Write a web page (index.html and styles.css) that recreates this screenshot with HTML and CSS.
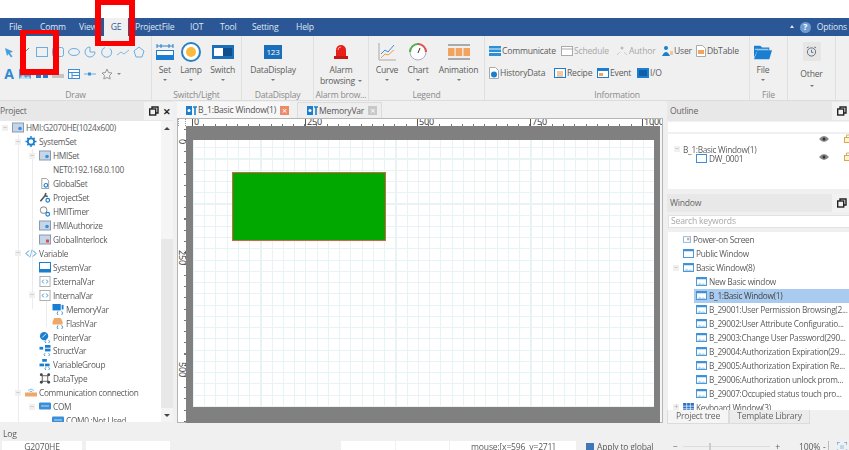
FILE: index.html
```html
<!DOCTYPE html>
<html lang="en">
<head>
    <meta charset="UTF-8">
    <meta name="viewport" content="width=device-width, initial-scale=1.0">
    <title>HMI Editor</title>
    <link rel="stylesheet" href="styles.css">
</head>
<body>
<svg class="defs" width="0" height="0">
    <symbol id="win" viewBox="0 0 12 10"><rect x=".5" y=".5" width="11" height="9" fill="#fff" stroke="#3a8fd8"/><rect x=".5" y=".5" width="11" height="2" fill="#3a8fd8"/><path d="M1 9l3-3 2 2 2-1 3 2z" fill="#a9d6f0"/></symbol>
    <symbol id="gear" viewBox="0 0 12 12"><circle cx="6" cy="6" r="3.500" fill="none" stroke="#1a7fd0" stroke-width="2"/><path d="M6 0v2M6 10v2M0 6h2M10 6h2M2 2l1.400 1.400M8.600 8.600L10 10M10 2L8.600 3.400M3.400 8.600L2 10" stroke="#1a7fd0" stroke-width="1.600"/></symbol>
    <symbol id="mon" viewBox="0 0 12 10"><rect x=".5" y=".5" width="11" height="9" fill="#c6d6e8" stroke="#8a9bb0"/><circle cx="8" cy="6" r="1.800" fill="#3a8fd8"/></symbol>
    <symbol id="doc" viewBox="0 0 12 12"><path d="M2.500.5h5l2.500 2.500v8.500h-7.500z" fill="#fff" stroke="#999"/><circle cx="7" cy="8" r="2" fill="none" stroke="#1a7fd0" stroke-width="1.200"/></symbol>
    <symbol id="wrench" viewBox="0 0 12 12"><path d="M1 10l5-6 1-3M6 4l3 1" stroke="#555" stroke-width="1.800" fill="none"/><circle cx="9" cy="9" r="2" fill="none" stroke="#1a7fd0" stroke-width="1.300"/></symbol>
    <symbol id="timer" viewBox="0 0 12 12"><rect x="1" y="1" width="7" height="7" rx="3" fill="#fff" stroke="#777"/><circle cx="9" cy="9" r="2" fill="none" stroke="#1a7fd0" stroke-width="1.300"/></symbol>
    <symbol id="lock" viewBox="0 0 12 10"><rect x=".5" y=".5" width="11" height="9" fill="#c6d6e8" stroke="#8a9bb0"/><rect x="7" y="5" width="3" height="3" fill="#e0484d"/></symbol>
    <symbol id="code" viewBox="0 0 12 10"><path d="M4 2L1 5l3 3M8 2l3 3-3 3" fill="none" stroke="#2a90d8"/><path d="M7 1L5 9" stroke="#8cc0e6"/></symbol>
    <symbol id="sys" viewBox="0 0 12 11"><rect x=".5" y=".5" width="11" height="7" fill="#fff" stroke="#1a7fd0"/><rect x="0" y="8" width="12" height="2.500" fill="#1a7fd0"/></symbol>
    <symbol id="box" viewBox="0 0 12 12"><rect x=".5" y=".5" width="11" height="11" fill="#fff" stroke="#aaa"/><path d="M4.500 4L3 6l1.500 2M7.500 4L9 6 7.500 8" fill="none" stroke="#2a90d8"/></symbol>
    <symbol id="mem" viewBox="0 0 12 12"><rect x="0" y="0" width="9" height="7" fill="#1a7fd0"/><rect x="10" y="1" width="2" height="5" fill="#1a7fd0"/><path d="M6 8L5 10l1 2M10 8l1 2-1 2" fill="none" stroke="#2a90d8"/></symbol>
    <symbol id="flash" viewBox="0 0 12 12"><path d="M2 0h7l2 4v3H0V4z" fill="#f0a868"/><path d="M6 8L5 10l1 2M10 8l1 2-1 2" fill="none" stroke="#2a90d8"/></symbol>
    <symbol id="ptr" viewBox="0 0 12 12"><circle cx="5" cy="4.500" r="4.500" fill="#1a7fd0"/><path d="M3 6l4-4" stroke="#fff"/><path d="M7 9l-1 1.500 1 1.500M10 9l1 1.500-1 1.500" fill="none" stroke="#2a90d8"/></symbol>
    <symbol id="struct" viewBox="0 0 12 12"><rect x="0" y="2" width="4" height="3" fill="#1a7fd0"/><rect x="6" y="0" width="6" height="3" fill="#1a7fd0"/><rect x="6" y="4" width="6" height="3" fill="#1a7fd0"/><path d="M6 9l-1 1.500 1 1.500M10 9l1 1.500-1 1.500" fill="none" stroke="#2a90d8"/></symbol>
    <symbol id="group" viewBox="0 0 12 12"><rect x="3" y="0" width="5" height="3" fill="#1a7fd0"/><rect x="0" y="5" width="5" height="3" fill="#1a7fd0"/><rect x="6" y="5" width="5" height="3" fill="#1a7fd0"/><path d="M7 9l-1 1.500 1 1.500M10 9l1 1.500-1 1.500" fill="none" stroke="#2a90d8"/></symbol>
    <symbol id="dtype" viewBox="0 0 12 12"><rect x="3" y="3" width="6" height="6" fill="none" stroke="#555"/><circle cx="2" cy="2" r="1.600" fill="#444"/><circle cx="10" cy="2" r="1.600" fill="#444"/><circle cx="2" cy="10" r="1.600" fill="#444"/><circle cx="10" cy="10" r="1.600" fill="#444"/></symbol>
    <symbol id="comm" viewBox="0 0 12 10"><rect x="0" y="5" width="12" height="4" fill="#f0a868"/><path d="M3 3q3-3 6 0M4.500 4.500q1.500-1.500 3 0" fill="none" stroke="#7cc0ee"/></symbol>
    <symbol id="com" viewBox="0 0 12 8"><rect width="12" height="7" rx="1" fill="#3a8fd8"/><path d="M2 3.500h8" stroke="#bcdcf4"/></symbol>
    <symbol id="pow" viewBox="0 0 10 8"><rect x=".5" y=".5" width="9" height="7" fill="#fff" stroke="#6aaee4"/><rect x="5" y="2" width="3" height="3" fill="#f0a080"/></symbol>
    <symbol id="pub" viewBox="0 0 12 10"><rect x=".5" y=".5" width="11" height="9" fill="#fff" stroke="#3a8fd8"/><rect x=".5" y=".5" width="11" height="2" fill="#3a8fd8"/></symbol>
    <symbol id="kbd" viewBox="0 0 12 10"><rect width="12" height="10" fill="#2a6fc8"/><path d="M0 3.500h12M0 6.500h12M4 0v10M8 0v10" stroke="#fff" stroke-width=".8"/></symbol>
    <symbol id="restore" viewBox="0 0 10 10"><rect x=".7" y="3" width="6" height="6" fill="none" stroke="#222" stroke-width="1.400"/><path d="M3 3V1h6v6H7" fill="none" stroke="#222" stroke-width="1.400"/></symbol>
    <symbol id="eye" viewBox="0 0 10 6"><path d="M0 3q5-6 10 0-5 6-10 0z" fill="#888"/><circle cx="5" cy="3" r="1.500" fill="#333"/></symbol>
    <symbol id="pad" viewBox="0 0 9 9"><rect x=".5" y="3.500" width="8" height="5" fill="#fff3d0" stroke="#d6a850"/><path d="M2.500 3.500V1h4v2.500" fill="none" stroke="#c9b27a"/></symbol>
    <symbol id="dt" viewBox="0 0 11 9"><rect width="6" height="9" fill="#1a7fd0"/><circle cx="3" cy="4.500" r="1.500" fill="#fff"/><path d="M7 1h4M9 1v8" stroke="#1a7fd0" stroke-width="1.600"/></symbol>
</svg>

<div class="page">
    <div class="top-gap"></div>
    <div class="menu">
        <span class="menu-item m-file">File</span>
        <span class="menu-item m-comm">Comm</span>
        <span class="menu-item m-view">View</span>
        <span class="menu-item m-ge">GE</span>
        <span class="menu-item m-proj">ProjectFile</span>
        <span class="menu-item m-iot">IOT</span>
        <span class="menu-item m-tool">Tool</span>
        <span class="menu-item m-set">Setting</span>
        <span class="menu-item m-help">Help</span>
        <span class="menu-right"><span class="up-caret"></span><span class="help-dot">?</span><span>Options</span></span>
    </div>

    <div class="ribbon">
        <div class="group g-draw">
            <div class="group-body draw-rows">
                <div class="draw-row">
                    <svg viewBox="0 0 12 12"><path d="M2 2l8 3.500-3 1.500 2.500 3.500-1.500 1-2.500-3.500-1.500 2z" fill="#4a9fe0"/></svg>
                    <svg viewBox="0 0 12 12"><path d="M2 10l8-8" stroke="#777"/></svg>
                    <svg viewBox="0 0 12 12"><rect x=".5" y="1.500" width="11" height="9" fill="none" stroke="#6aaee4"/></svg>
                    <svg viewBox="0 0 12 12"><rect x=".5" y="1.500" width="11" height="9" rx="2" fill="none" stroke="#6aaee4"/></svg>
                    <svg viewBox="0 0 12 12"><ellipse cx="6" cy="6" rx="5.500" ry="3.500" fill="none" stroke="#6aaee4"/></svg>
                    <svg viewBox="0 0 12 12"><path d="M6 1a5 5 0 1 0 5 5H6z" fill="none" stroke="#6aaee4"/></svg>
                    <svg viewBox="0 0 12 12"><path d="M9 2.500a5 5 0 1 1-5-1" fill="none" stroke="#6aaee4"/></svg>
                    <svg viewBox="0 0 12 12"><path d="M0 9l4-3 3 2 5-4" fill="none" stroke="#8ab8dc"/></svg>
                    <svg viewBox="0 0 12 12"><path d="M6 1l5 4-2 6H3L1 5z" fill="none" stroke="#6aaee4"/></svg>
                </div>
                <div class="draw-row">
                    <span class="big-a">A</span>
                    <svg viewBox="0 0 12 12"><rect y="1" width="12" height="10" fill="#5a9fd8"/><path d="M0 11l4-4 3 3 2-2 3 3z" fill="#bfe0f2"/></svg>
                    <svg viewBox="0 0 12 12"><rect y="2" width="5" height="8" fill="#1a7fd0"/><rect x="7" y="2" width="5" height="8" fill="#1a7fd0"/></svg>
                    <svg viewBox="0 0 12 12"><rect y="6" width="12" height="4" fill="#c4c4c4"/></svg>
                    <svg viewBox="0 0 12 12"><rect x=".5" y="1.500" width="11" height="9" fill="#fff" stroke="#3a8fd8"/><path d="M.5 4.500h11M4 4.500v6M4 7.500h7.500" stroke="#3a8fd8"/></svg>
                    <svg viewBox="0 0 12 12"><path d="M0 6h12" stroke="#6aaee4"/><rect x="4" y="4.500" width="3" height="3" fill="#3a8fd8"/></svg>
                    <svg viewBox="0 0 12 12"><path d="M6 1l1.500 3.500 3.500.5-2.500 2.500.7 3.500L6 9.500 2.800 11l.7-3.500L1 5l3.500-.5z" fill="none" stroke="#999"/></svg>
                    <span class="mini-caret"></span>
                </div>
            </div>
            <div class="group-label">Draw</div>
        </div>

        <div class="group g-switch">
            <div class="group-body tools">
                <div class="tool t-set">
                    <svg class="big-icon" viewBox="0 0 18 18"><path d="M1 1v4M5 1v4M13 1v4M17 1v4M1 3h16" stroke="#2a7fc8"/><rect x="0" y="7" width="18" height="10" fill="#1a7fd0"/><rect x="1" y="8" width="16" height="4" fill="#fff"/></svg>
                    <span>Set</span><i class="caret"></i>
                </div>
                <div class="tool t-lamp">
                    <svg class="big-icon lamp" viewBox="0 0 20 20"><circle cx="10" cy="10" r="9" fill="#fff" stroke="#2a7fc8" stroke-width="2"/><circle cx="10" cy="10" r="5" fill="#f7bb3e"/></svg>
                    <span>Lamp</span><i class="caret"></i>
                </div>
                <div class="tool t-switch">
                    <svg class="big-icon wide" viewBox="0 0 22 18"><rect y="2" width="22" height="14" fill="#1a6fb8"/><rect x="2" y="5" width="9" height="8" fill="#fff"/><rect x="11" y="5" width="9" height="8" fill="#0f4f8c"/></svg>
                    <span>Switch</span><i class="caret"></i>
                </div>
            </div>
            <div class="group-label">Switch/Light</div>
        </div>

        <div class="group g-display">
            <div class="group-body tools">
                <div class="tool t-data">
                    <span class="num-icon">123</span>
                    <span>DataDisplay</span><i class="caret"></i>
                </div>
            </div>
            <div class="group-label">DataDisplay</div>
        </div>

        <div class="group g-alarm">
            <div class="group-body tools">
                <div class="tool t-alarm">
                    <svg class="big-icon" viewBox="0 0 18 18"><path d="M4 13V7a5 5 0 0 1 10 0v6z" fill="#e8201c"/><path d="M6 7a3 3 0 0 1 3-3" stroke="#ffb0a8" fill="none"/><rect x="2" y="13" width="14" height="3" fill="#c41814"/></svg>
                    <span class="two-line">Alarm<br>browsing <i class="caret inline"></i></span>
                </div>
            </div>
            <div class="group-label">Alarm brow...</div>
        </div>

        <div class="group g-legend">
            <div class="group-body tools">
                <div class="tool t-curve">
                    <svg class="big-icon" viewBox="0 0 18 18"><path d="M1 0v17h17" stroke="#aaa" fill="none"/><path d="M3 11l4-4 3 2 6-7" stroke="#3a8fd8" fill="none"/><path d="M3 15l4-4 3 1 6-5" stroke="#f0a040" fill="none"/></svg>
                    <span>Curve</span><i class="caret"></i>
                </div>
                <div class="tool t-chart">
                    <svg class="big-icon" viewBox="0 0 18 18"><circle cx="9" cy="9" r="8" fill="#fff" stroke="#aac"/><path d="M9 1a8 8 0 0 1 8 8" stroke="#e05050" stroke-width="2" fill="none"/><path d="M1 9a8 8 0 0 1 8-8" stroke="#50b050" stroke-width="2" fill="none"/><path d="M9 10l2-5" stroke="#333"/></svg>
                    <span>Chart</span><i class="caret"></i>
                </div>
                <div class="tool t-anim">
                    <svg class="big-icon wide" viewBox="0 0 22 18"><rect y="1" width="22" height="2" fill="#aaa"/><rect y="15" width="22" height="2" fill="#aaa"/><rect y="5" width="6.500" height="8" fill="#f2a35e"/><rect x="7.700" y="5" width="6.500" height="8" fill="#f2a35e"/><rect x="15.500" y="5" width="6.500" height="8" fill="#f2a35e"/></svg>
                    <span>Animation</span><i class="caret"></i>
                </div>
            </div>
            <div class="group-label">Legend</div>
        </div>

        <div class="group g-info">
            <div class="group-body info-rows">
                <div class="info-row">
                    <span class="info i-comm"><svg viewBox="0 0 12 10"><path d="M0 0h12v2.500H0zM0 3.500h12V6H0zM0 7h12v3H0z" fill="#2a90d8"/></svg>Communicate</span>
                    <span class="info off i-sched"><svg viewBox="0 0 12 10"><rect x=".5" y=".5" width="11" height="9" fill="#fff" stroke="#aaa"/><path d="M.5 3h11" stroke="#aaa"/></svg>Schedule</span>
                    <span class="info off i-auth"><svg viewBox="0 0 12 10"><circle cx="6" cy="2" r="1.500" fill="#bbb"/><path d="M1 9l3-3M11 9L8 6" stroke="#ccc"/></svg>Author</span>
                    <span class="info i-user"><svg viewBox="0 0 12 10"><circle cx="5" cy="2" r="2" fill="#1a7fd0"/><path d="M1 10q4-8 8 0z" fill="#1a7fd0"/><path d="M9 6h3M9 8h3" stroke="#f0a040"/></svg>User</span>
                    <span class="info i-db"><svg class="slim" viewBox="0 0 10 12"><path d="M.5.500h6l3 3v8h-9z" fill="#fff" stroke="#aaa"/><rect x="2" y="5" width="6" height="4" fill="#f2a35e"/></svg>DbTable</span>
                </div>
                <div class="info-row">
                    <span class="info i-hist"><svg class="slim" viewBox="0 0 10 12"><path d="M.5.500h6l3 3v8h-9z" fill="#fff" stroke="#aaa"/><circle cx="5" cy="7.500" r="3" fill="#1a7fd0"/></svg>HistoryData</span>
                    <span class="info i-rec"><svg viewBox="0 0 12 10"><rect x=".5" y=".5" width="11" height="9" fill="#fff" stroke="#1a7fd0"/><rect x="3" y="3" width="6" height="6" fill="#f2c8a0"/></svg>Recipe</span>
                    <span class="info i-evt"><svg viewBox="0 0 12 10"><rect x=".5" y=".5" width="11" height="9" fill="#fff" stroke="#1a7fd0"/><rect x="1" y="1" width="10" height="2" fill="#1a7fd0"/><rect x="2" y="5" width="4" height="3" fill="#f2a35e"/></svg>Event</span>
                    <span class="info i-io"><svg viewBox="0 0 12 10"><rect width="12" height="10" fill="#1a7fd0"/><rect x="2" y="2" width="8" height="6" fill="#0f5fa8"/></svg>I/O</span>
                </div>
            </div>
            <div class="group-label">Information</div>
        </div>

        <div class="group g-file">
            <div class="group-body tools">
                <div class="tool t-folder">
                    <svg class="big-icon" viewBox="0 0 20 18"><path d="M0 2h7l2 2h8v3H4L0 15z" fill="#1a7fd0"/><path d="M4 7h16l-3 10H0z" fill="#1a7fd0"/><path d="M1 6h15" stroke="#fff" stroke-width=".8"/></svg>
                    <span>File</span><i class="caret"></i>
                </div>
            </div>
            <div class="group-label">File</div>
        </div>

        <div class="group g-other">
            <div class="group-body tools">
                <div class="tool t-other">
                    <span class="clock-box"><svg viewBox="0 0 12 12"><circle cx="6" cy="6.500" r="4.500" fill="none" stroke="#666"/><path d="M6 4v3h2" stroke="#1a7fd0" fill="none"/><path d="M1 2l2-1M11 2L9 1" stroke="#666"/></svg></span>
                    <span>Other</span><i class="caret"></i>
                </div>
            </div>
        </div>
        <div class="ribbon-end"></div>
    </div>

    <div class="main">
        <div class="panel left-panel">
            <div class="panel-head">
                <span>Project</span>
                <span class="head-btns"><svg class="restore-ico"><use href="#restore"/></svg><b>✕</b></span>
            </div>
            <div class="tree-wrap">
                <div class="tree project-tree">
                    <div class="row lv0"><i class="exp">−</i><svg><use href="#mon"/></svg>HMI:G2070HE(1024x600)</div>
                    <div class="row lv1"><i class="exp">−</i><svg><use href="#gear"/></svg>SystemSet</div>
                    <div class="row lv2"><i class="exp">−</i><svg><use href="#mon"/></svg>HMISet</div>
                    <div class="row lv2 plain">NET0:192.168.0.100</div>
                    <div class="row lv2"><svg><use href="#doc"/></svg>GlobalSet</div>
                    <div class="row lv2"><svg><use href="#wrench"/></svg>ProjectSet</div>
                    <div class="row lv2"><svg><use href="#timer"/></svg>HMITimer</div>
                    <div class="row lv2"><svg><use href="#mon"/></svg>HMIAuthorize</div>
                    <div class="row lv2"><svg><use href="#lock"/></svg>GlobalInterlock</div>
                    <div class="row lv1"><i class="exp">−</i><svg><use href="#code"/></svg>Variable</div>
                    <div class="row lv2"><svg><use href="#sys"/></svg>SystemVar</div>
                    <div class="row lv2"><svg><use href="#box"/></svg>ExternalVar</div>
                    <div class="row lv2"><i class="exp">−</i><svg><use href="#box"/></svg>InternalVar</div>
                    <div class="row lv3"><svg><use href="#mem"/></svg>MemoryVar</div>
                    <div class="row lv3"><svg><use href="#flash"/></svg>FlashVar</div>
                    <div class="row lv2"><svg><use href="#ptr"/></svg>PointerVar</div>
                    <div class="row lv2"><svg><use href="#struct"/></svg>StructVar</div>
                    <div class="row lv2"><svg><use href="#group"/></svg>VariableGroup</div>
                    <div class="row lv2"><svg><use href="#dtype"/></svg>DataType</div>
                    <div class="row lv1"><i class="exp">−</i><svg><use href="#comm"/></svg>Communication connection</div>
                    <div class="row lv2"><i class="exp">−</i><svg><use href="#com"/></svg>COM</div>
                    <div class="row lv3"><svg><use href="#com"/></svg>COM0 :Not Used</div>
                </div>
                <div class="scrollbar">
                    <span class="arrow up"></span>
                    <span class="thumb"></span>
                    <span class="arrow down"></span>
                </div>
            </div>
        </div>

        <div class="center">
            <div class="doc-tabs">
                <div class="doc-tab active"><svg><use href="#dt"/></svg>B_1:Basic Window(1)<span class="tab-x red">×</span></div>
                <div class="doc-tab second"><svg><use href="#dt"/></svg>MemoryVar<span class="tab-x">×</span></div>
            </div>
            <div class="editor">
                <div class="ruler-top">
                    <span class="corner"></span>
                    <div class="ruler-h">
                        <span class="tick-label l0">0</span>
                        <span class="tick-label l250">250</span>
                        <span class="tick-label l500">500</span>
                        <span class="tick-label l750">750</span>
                        <span class="tick-label l1000">1000</span>
                    </div>
                </div>
                <div class="editor-body">
                    <div class="ruler-v">
                        <span class="v-label v0">0</span>
                        <span class="v-label v250">250</span>
                        <span class="v-label v500">500</span>
                    </div>
                    <div class="stage">
                        <div class="screen">
                            <div class="shape"></div>
                        </div>
                    </div>
                </div>
            </div>
        </div>

        <div class="panel right-panel">
            <div class="panel-head">
                <span>Outline</span>
                <span class="head-btns"><svg class="restore-ico"><use href="#restore"/></svg></span>
            </div>
            <div class="outline-strip"></div>
            <div class="outline-tree">
                <div class="o-row first"><svg class="eye"><use href="#eye"/></svg><svg class="pad"><use href="#pad"/></svg></div>
                <div class="o-row parent"><i class="exp">−</i><span>B_1:Basic Window(1)</span></div>
                <div class="o-row child"><span class="o-rect"></span><span>DW_0001</span><svg class="eye"><use href="#eye"/></svg><svg class="pad"><use href="#pad"/></svg></div>
            </div>
            <div class="panel-head second-head">
                <span>Window</span>
                <span class="head-btns"><svg class="restore-ico"><use href="#restore"/></svg></span>
            </div>
            <div class="search">Search keywords</div>
            <div class="tree window-tree">
                <div class="row wl1 narrow"><svg><use href="#pow"/></svg>Power-on Screen</div>
                <div class="row wl1"><svg><use href="#pub"/></svg>Public Window</div>
                <div class="row wl1"><i class="exp">−</i><svg><use href="#win"/></svg>Basic Window(8)</div>
                <div class="row wl2"><svg><use href="#win"/></svg>New Basic window</div>
                <div class="row wl2 selected"><svg><use href="#win"/></svg>B_1:Basic Window(1)</div>
                <div class="row wl2"><svg><use href="#win"/></svg>B_29001:User Permission Browsing(2...</div>
                <div class="row wl2"><svg><use href="#win"/></svg>B_29002:User Attribute Configuratio...</div>
                <div class="row wl2"><svg><use href="#win"/></svg>B_29003:Change User Password(290...</div>
                <div class="row wl2"><svg><use href="#win"/></svg>B_29004:Authorization Expiration(29...</div>
                <div class="row wl2"><svg><use href="#win"/></svg>B_29005:Authorization Expiration Re...</div>
                <div class="row wl2"><svg><use href="#win"/></svg>B_29006:Authorization unlock prom...</div>
                <div class="row wl2"><svg><use href="#win"/></svg>B_29007:Occupied status touch pro...</div>
                <div class="row wl1"><i class="exp">+</i><svg><use href="#kbd"/></svg>Keyboard Window(3)</div>
            </div>
            <div class="tree-tabs">
                <span class="tree-tab on">Project tree</span>
                <span class="tree-tab">Template Library</span>
            </div>
        </div>
    </div>

    <div class="log-area">
        <div class="log-title">Log</div>
        <div class="status">
            <span class="cell c1">G2070HE</span>
            <span class="cell c2"></span>
            <span class="cell c3"></span>
            <span class="cell c4"></span>
            <span class="cell c5">mouse:[x=596&nbsp; y=271]</span>
            <span class="check"></span>
            <span class="apply">Apply to global</span>
            <span class="slider"><span>−</span><span class="sl-track"><i></i></span><span>+</span></span>
            <span class="zoom-val">100%</span>
            <span class="zoom-drop">-</span>
            <svg class="fit" viewBox="0 0 10 10"><path d="M0 3V0h3M7 0h3v3M10 7v3H7M3 10H0V7" fill="none" stroke="#3a8fd8"/><rect x="3" y="3" width="4" height="4" fill="#bcd8ee"/></svg>
        </div>
    </div>
</div>

<!-- the two red boxes somebody drew on the screenshot -->
<div class="mark mark-tool"></div>
<div class="mark mark-tab"></div>
</body>
</html>
```

FILE: styles.css
```css
* {
    box-sizing: border-box;
}
html, body {
    margin: 0;
    padding: 0;
    width: 849px;
    height: 450px;
    overflow: hidden;
    background-color: #fff;
}
body {
    font-family: "Open Sans", "Noto Sans", sans-serif;
    font-size: 8.6px;
    letter-spacing: -0.2px;
    color: #5c5c5c;
    position: relative;
}
i {
    font-style: normal;
}
.defs {
    position: absolute;
}
.page {
    width: 849px;
    height: 450px;
    display: flex;
    flex-direction: column;
    filter: blur(0.35px);
}
.top-gap {
    height: 18px;
    flex: none;
}

/* menu bar */
.menu {
    height: 18px;
    flex: none;
    background-color: #2b5797;
    color: #dfe7f2;
    display: flex;
    align-items: center;
    position: relative;
}
.menu-item {
    position: absolute;
    top: 0;
    height: 18px;
    line-height: 18px;
}
.m-file { left: 9px; }
.m-comm { left: 40px; }
.m-view { left: 79px; }
.m-ge {
    left: 104px;
    width: 24px;
    text-align: center;
    background-color: #f0f0f0;
    color: #2b5797;
}
.m-proj { left: 135px; }
.m-iot { left: 190px; }
.m-tool { left: 220px; }
.m-set { left: 252px; }
.m-help { left: 296px; }
.menu-right {
    margin-left: auto;
    display: flex;
    align-items: center;
    gap: 6px;
    padding-right: 2px;
}
.up-caret {
    width: 0;
    height: 0;
    border: 2.500px solid transparent;
    border-bottom: 3px solid #dfe7f2;
    margin-bottom: 3px;
}
.help-dot {
    width: 11px;
    height: 11px;
    border-radius: 50%;
    background-color: #6f9bd3;
    color: #fff;
    font-weight: 700;
    text-align: center;
    line-height: 11px;
}

/* ribbon */
.ribbon {
    height: 65px;
    flex: none;
    display: flex;
    background-color: #f0f0f0;
    border-bottom: 1px solid #dcdcdc;
}
.group {
    flex: none;
    border-right: 1px solid #e0e0e0;
    display: flex;
    flex-direction: column;
}
.group-body {
    flex: 1;
    min-height: 0;
}
.group-label {
    height: 11px;
    line-height: 12px;
    text-align: center;
    color: #8a8a8a;
    white-space: nowrap;
}
.g-draw { width: 152px; }
.g-switch { width: 90px; }
.g-display { width: 72px; }
.g-alarm { width: 55px; }
.g-legend { width: 116px; }
.g-info { width: 265px; }
.g-file { width: 38px; }
.g-other { width: 48px; }
.ribbon-end {
    flex: 1;
}
.draw-rows {
    padding-top: 5px;
}
.draw-row {
    display: flex;
    align-items: center;
    height: 22px;
    padding-left: 3px;
    gap: 4.300px;
}
.draw-row svg {
    width: 12px;
    height: 12px;
    flex: none;
}
.big-a {
    width: 12px;
    font-size: 14px;
    font-weight: 700;
    color: #2f8ad6;
    text-align: center;
    line-height: 12px;
}
.mini-caret {
    width: 0;
    height: 0;
    border: 2px solid transparent;
    border-top: 2.500px solid #888;
    margin-top: 2px;
}
.tools {
    display: flex;
    align-items: flex-start;
}
.tool {
    display: flex;
    flex-direction: column;
    align-items: center;
    white-space: nowrap;
    padding-top: 7px;
    line-height: 11px;
}
.big-icon {
    width: 18px;
    height: 18px;
    margin-bottom: 4px;
}
.big-icon.wide {
    width: 22px;
}
.big-icon.lamp {
    width: 20px;
    height: 20px;
    margin-top: -1px;
    margin-bottom: 3px;
}
.caret {
    width: 0;
    height: 0;
    border: 2px solid transparent;
    border-top: 2.500px solid #777;
    margin-top: 3px;
}
.caret.inline {
    display: inline-block;
    margin: 0 0 0 1px;
}
.t-set { width: 26px; }
.t-lamp { width: 27px; }
.t-switch { width: 37px; }
.t-data { width: 62px; }
.t-alarm { width: 54px; }
.t-curve { width: 32px; margin-left: 2px; }
.t-chart { width: 30px; }
.t-anim { width: 51px; }
.t-folder { width: 26px; }
.t-other { width: 50px; padding-top: 6px; }
.num-icon {
    width: 18px;
    height: 14px;
    margin: 2px 0 6px;
    background-color: #1a6fb8;
    color: #fff;
    font-size: 8px;
    line-height: 14px;
    text-align: center;
}
.two-line {
    line-height: 10.500px;
    text-align: center;
}
.clock-box {
    width: 18px;
    height: 19px;
    background-color: #e6e6e6;
    display: flex;
    align-items: center;
    justify-content: center;
    margin-bottom: 8px;
}
.clock-box svg {
    width: 11px;
    height: 11px;
}
.t-other .caret {
    margin-top: 5px;
}
.info-rows {
    padding-top: 4px;
}
.info-row {
    display: flex;
    align-items: center;
    height: 22px;
}
.info {
    display: flex;
    align-items: center;
    gap: 1px;
    white-space: nowrap;
    flex: none;
}
.info svg {
    width: 12px;
    height: 10px;
}
.info svg.slim {
    width: 10px;
    height: 12px;
}
.info.off {
    color: #a8a8a8;
}
/* start of each item, counted from the group edge at 485 */
.i-comm { margin-left: 4px; width: 72px; }
.i-sched { width: 55px; }
.i-auth { width: 45px; }
.i-user { width: 35px; }
.i-hist { margin-left: 4px; width: 65px; }
.i-rec { width: 43px; }
.i-evt { width: 40px; }

/* main area */
.main {
    height: 325px;
    flex: none;
    display: flex;
    background-color: #f0f0f0;
}
.panel {
    flex: none;
    display: flex;
    flex-direction: column;
}
.left-panel {
    width: 173px;
}
.right-panel {
    width: 182px;
    margin-left: 1px;
}
.panel-head {
    height: 20px;
    flex: none;
    background-color: #e8e8e8;
    display: flex;
    align-items: center;
    justify-content: space-between;
    padding-left: 3px;
    color: #666;
}
.left-panel .panel-head {
    padding-left: 0;
}
.head-btns {
    display: flex;
    align-items: center;
    gap: 4px;
    height: 18px;
    padding: 0 2px 0 5px;
    background-color: #f2f2f2;
}
.head-btns b {
    font-size: 9px;
    color: #222;
}
.restore-ico {
    width: 10px;
    height: 10px;
}
.tree-wrap {
    flex: 1;
    min-height: 0;
    display: flex;
    background-color: #fff;
    margin-bottom: 4px;
    overflow: hidden;
}
.tree {
    background-color: #fff;
    overflow: hidden;
    font-size: 8.3px;
    letter-spacing: -0.3px;
}
.project-tree {
    flex: 1;
    background-image:
        linear-gradient(#ececec, #ececec),
        linear-gradient(#ececec, #ececec),
        linear-gradient(#ececec, #ececec);
    background-repeat: no-repeat;
    background-size: 1px 290px, 1px 160px, 1px 36px;
    background-position: 18px 14px, 32px 28px, 46px 170px;
}
.row {
    height: 13.940px;
    display: flex;
    align-items: center;
    white-space: nowrap;
    position: relative;
}
.row svg {
    width: 12px;
    height: 11px;
    flex: none;
    margin-right: 2px;
}
.exp {
    width: 6px;
    height: 6px;
    margin-left: -10px;
    margin-right: 4px;
    flex: none;
    background-color: #f0f0f0;
    color: #aaa;
    font-size: 7px;
    line-height: 6px;
    text-align: center;
}
.lv0 { padding-left: 12px; }
.lv1 { padding-left: 25px; }
.lv2 { padding-left: 39px; }
.lv2.plain { padding-left: 53px; }
.lv3 { padding-left: 52px; }
.scrollbar {
    width: 12px;
    flex: none;
    background-color: #e8e8e8;
    display: flex;
    flex-direction: column;
}
.arrow {
    width: 12px;
    height: 14px;
    flex: none;
    display: flex;
    align-items: center;
    justify-content: center;
    background-color: #f4f4f4;
}
.arrow::after {
    content: "";
    border: 3px solid transparent;
}
.arrow.up::after {
    border-bottom: 3px solid #444;
    margin-bottom: 3px;
}
.arrow.down {
    margin-top: auto;
}
.arrow.down::after {
    border-top: 3px solid #444;
    margin-top: 3px;
}
.thumb {
    width: 12px;
    height: 104px;
    background-color: #f5f5f5;
}

/* editor */
.center {
    width: 489px;
    flex: none;
    margin-left: 4px;
    display: flex;
    flex-direction: column;
}
.doc-tabs {
    height: 17px;
    flex: none;
    display: flex;
    align-items: flex-end;
    gap: 8px;
}
.doc-tab {
    height: 16px;
    display: flex;
    align-items: center;
    gap: 1px;
    padding: 0 0 0 9px;
    background-color: #f7f7f7;
    color: #555;
}
.doc-tab.second {
    background-color: #eeeeee;
    border: 1px solid #dcdcdc;
    border-bottom: 0;
    padding-right: 4px;
}
.doc-tab svg {
    width: 11px;
    height: 9px;
}
.tab-x {
    width: 9px;
    height: 9px;
    margin-left: 3px;
    background-color: #c8c8c8;
    color: #fff;
    font-size: 9px;
    line-height: 9px;
    text-align: center;
}
.tab-x.red {
    background-color: #ee8a6a;
}
.editor {
    height: 305px;
    flex: none;
    width: 486px;
    border: 1px solid #b5b5b5;
    background-color: #f5f5f5;
    display: flex;
    flex-direction: column;
}
.ruler-top {
    height: 7px;
    flex: none;
    display: flex;
    background-color: #fff;
}
.corner {
    width: 8px;
    flex: none;
    border-left: 1px dotted #999;
    border-right: 1px dotted #999;
}
.ruler-h {
    flex: 1;
    position: relative;
    overflow: hidden;
    background-image: repeating-linear-gradient(90deg, #777 0, #777 1px, transparent 1px, transparent 11.250px);
    background-size: 100% 2px;
    background-position: 6px bottom;
    background-repeat: no-repeat;
}
.tick-label {
    position: absolute;
    top: -2px;
    font-size: 9px;
    color: #333;
    line-height: 10px;
    padding-left: 1px;
    border-left: 1px solid #555;
}
.l0 { left: 6px; }
.l250 { left: 119px; }
.l500 { left: 231px; }
.l750 { left: 344px; }
.l1000 { left: 456px; }
.editor-body {
    flex: 1;
    display: flex;
    min-height: 0;
}
.ruler-v {
    width: 8px;
    flex: none;
    background-color: #fff;
    position: relative;
    overflow: hidden;
    background-image: repeating-linear-gradient(0deg, #777 0, #777 1px, transparent 1px, transparent 11.250px);
    background-size: 2px 100%;
    background-position: right top;
    background-repeat: no-repeat;
}
.v-label {
    position: absolute;
    left: 9px;
    font-size: 9px;
    line-height: 9px;
    color: #333;
    transform: rotate(90deg);
    transform-origin: left top;
}
.v0 { top: 13px; }
.v250 { top: 124px; }
.v500 { top: 236px; }
.stage {
    width: 474px;
    height: 297px;
    background-color: #808080;
    padding: 14px 6px 15px 7px;
}
.screen {
    width: 461px;
    height: 267px;
    position: relative;
    background-color: #fff;
    background-image:
        repeating-linear-gradient(90deg, #e8f3f4 0, #e8f3f4 1px, transparent 1px, transparent 11.250px),
        repeating-linear-gradient(0deg, #e8f3f4 0, #e8f3f4 1px, transparent 1px, transparent 11.250px);
}
.shape {
    position: absolute;
    left: 39px;
    top: 32px;
    width: 154px;
    height: 69px;
    background-color: #00a800;
    border: 1px solid #d9604a;
}

/* right side */
.outline-strip {
    height: 10px;
    flex: none;
    margin-top: 1px;
    margin-left: 1px;
    background-color: #fff;
}
.outline-tree {
    height: 55px;
    flex: none;
    margin: 2px 0 0 1px;
    padding-left: 6px;
    background-color: #fff;
    position: relative;
    font-size: 8.3px;
    letter-spacing: -0.3px;
}
.o-row {
    display: flex;
    align-items: center;
    position: relative;
    white-space: nowrap;
}
.o-row.first {
    height: 9px;
}
.o-row .exp {
    margin-left: 0;
    margin-right: 3px;
}
.o-row.parent {
    height: 12px;
}
.o-row.child {
    padding-left: 22px;
    height: 12px;
    margin-top: -3px;
}
.o-rect {
    width: 11px;
    height: 9px;
    border: 1px solid #3a8fd8;
    margin-right: 2px;
}
.eye, .pad {
    position: absolute;
}
.eye {
    left: 145px;
    top: 2px;
    width: 10px;
    height: 6px;
}
.pad {
    left: 170px;
    top: 0;
    width: 9px;
    height: 9px;
}
.second-head {
    margin-top: 5px;
    height: 18px;
}
.search {
    height: 13px;
    flex: none;
    margin: 3px 0 0 1px;
    padding-left: 2px;
    line-height: 11px;
    background-color: #fff;
    border: 1px solid #e2e2e2;
    border-right: 0;
    color: #a8a8a8;
}
.window-tree {
    height: 178px;
    flex: none;
    margin: 4px 0 0 1px;
    padding-top: 1px;
}
.wl1 { padding-left: 15px; }
.wl2 { padding-left: 28px; }
.wl1 svg, .wl2 svg {
    width: 11px;
    height: 9px;
    margin-right: 2px;
}
.narrow svg {
    width: 8px;
    height: 7px;
}
.selected {
    background-color: #a9cbef;
    margin-left: 26px;
    padding-left: 2px;
    color: #444;
}
.tree-tabs {
    height: 14px;
    flex: none;
    display: flex;
}
.tree-tab {
    padding: 0 7px;
    line-height: 13px;
    background-color: #ececec;
    border: 1px solid #dcdcdc;
    border-top: 0;
    color: #666;
}
.tree-tab.on {
    background-color: #f5f5f5;
    padding: 0 8px;
}

/* log + status */
.log-area {
    flex: 1;
    background-color: #f0f0f0;
    overflow: hidden;
}
.log-title {
    height: 15px;
    line-height: 16px;
    padding-left: 3px;
}
.status {
    height: 14px;
    display: flex;
    align-items: center;
    padding-left: 2px;
}
.cell {
    height: 14px;
    background-color: #fff;
    text-align: center;
    line-height: 12px;
    flex: none;
}
.c1 { width: 80px; }
.c2 { width: 84px; margin-left: 4px; }
.c3 { width: 54px; margin-left: 171px; }
.c4 { width: 53px; margin-left: 1px; }
.c5 { width: 126px; margin-left: 1px; }
.check {
    width: 8px;
    height: 8px;
    flex: none;
    margin: -3px 0 0 10px;
    background-color: #3f76b8;
}
.apply {
    margin: -3px 0 0 3px;
    width: 62px;
    white-space: nowrap;
}
.slider {
    display: flex;
    align-items: center;
    margin: -3px 0 0 14px;
    width: 107px;
    flex: none;
}
.sl-track {
    flex: 1;
    height: 1px;
    margin: 0 5px;
    background-color: #ddd;
    position: relative;
}
.sl-track i {
    position: absolute;
    left: 26px;
    top: -3px;
    width: 2px;
    height: 7px;
    background-color: #ccc;
}
.zoom-val {
    margin: -3px 0 0 19px;
}
.zoom-drop {
    margin: -3px 0 0 3px;
    padding-right: 2px;
    border-right: 1px solid #bbb;
}
.fit {
    width: 10px;
    height: 10px;
    margin: -3px 0 0 8px;
    flex: none;
}

/* red annotation boxes */
.mark {
    position: absolute;
    border-style: solid;
    border-color: #fa0000;
}
.mark-tool {
    left: 20px;
    top: 30px;
    width: 39px;
    height: 45px;
    border-width: 4px 6px 6px 6px;
}
.mark-tab {
    left: 95px;
    top: 0;
    width: 40px;
    height: 46px;
    border-width: 5px 6px 5px 6px;
}
```
